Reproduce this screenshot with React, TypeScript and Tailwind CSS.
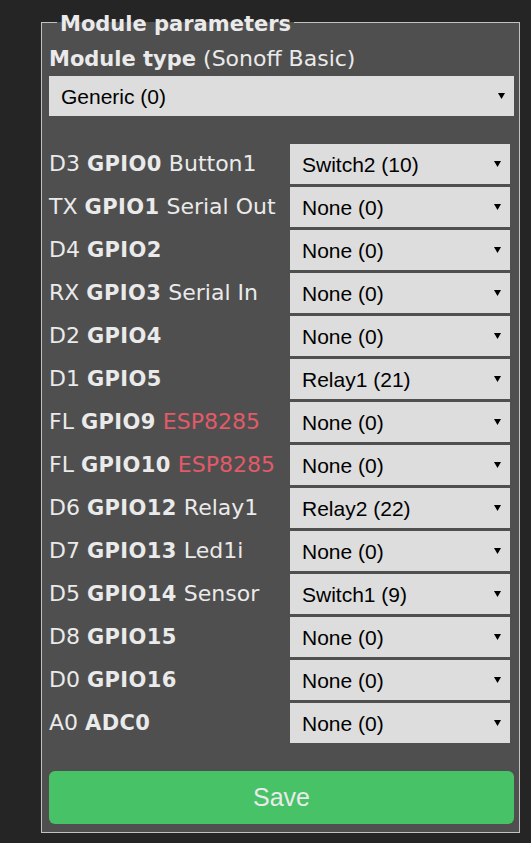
import React from 'react';

type Pin = {
  pad: string;
  gpio: string;
  note?: string;
  warn?: boolean;
  value: string;
};

const pins: Pin[] = [
  { pad: 'D3', gpio: 'GPIO0', note: 'Button1', value: 'Switch2 (10)' },
  { pad: 'TX', gpio: 'GPIO1', note: 'Serial Out', value: 'None (0)' },
  { pad: 'D4', gpio: 'GPIO2', value: 'None (0)' },
  { pad: 'RX', gpio: 'GPIO3', note: 'Serial In', value: 'None (0)' },
  { pad: 'D2', gpio: 'GPIO4', value: 'None (0)' },
  { pad: 'D1', gpio: 'GPIO5', value: 'Relay1 (21)' },
  { pad: 'FL', gpio: 'GPIO9', note: 'ESP8285', warn: true, value: 'None (0)' },
  { pad: 'FL', gpio: 'GPIO10', note: 'ESP8285', warn: true, value: 'None (0)' },
  { pad: 'D6', gpio: 'GPIO12', note: 'Relay1', value: 'Relay2 (22)' },
  { pad: 'D7', gpio: 'GPIO13', note: 'Led1i', value: 'None (0)' },
  { pad: 'D5', gpio: 'GPIO14', note: 'Sensor', value: 'Switch1 (9)' },
  { pad: 'D8', gpio: 'GPIO15', value: 'None (0)' },
  { pad: 'D0', gpio: 'GPIO16', value: 'None (0)' },
  { pad: 'A0', gpio: 'ADC0', value: 'None (0)' },
];

const options = ['None (0)', 'Switch1 (9)', 'Switch2 (10)', 'Relay1 (21)', 'Relay2 (22)'];

function Arrow() {
  return (
    <svg
      className="pointer-events-none absolute right-[9px] top-1/2 -translate-y-1/2"
      width="7"
      height="6"
      viewBox="0 0 7 6"
    >
      <path d="M0 0 H7 L3.5 6 Z" fill="#000" />
    </svg>
  );
}

function Dropdown({ value, items, className }: { value: string; items: string[]; className: string }) {
  return (
    <div className={'relative ' + className}>
      <select
        defaultValue={value}
        className="h-[40px] w-full appearance-none rounded-none bg-[#dddddd] pl-[12px] pr-[24px] font-['Liberation_Sans',Arial,sans-serif] text-[21px] leading-[25px] text-black outline-none"
      >
        {items.map((o) => (
          <option key={o}>{o}</option>
        ))}
      </select>
      <Arrow />
    </div>
  );
}

export default function App() {
  return (
    <div className="min-h-screen bg-[#252525] pt-[7px] font-['DejaVu_Sans',Verdana,sans-serif] text-[22px] leading-[25px] text-[#eaeaea]">
      <fieldset className="ml-[41px] w-[479px] border border-[#c2c2c2] bg-[#4f4f4f] pb-[8px] pl-[7px] pr-[5px] pt-[9px]">
        <legend className="ml-[8px] px-[3px] pt-[5px] text-[21px] font-bold">Module parameters</legend>

        <div>
          <b className="text-[21px]">Module type</b> (Sonoff Basic)
        </div>
        <Dropdown value="Generic (0)" items={['Generic (0)', 'Sonoff Basic (1)']} className="mt-[4px] w-full" />

        <div className="mt-[28px] flex w-[461px] flex-col gap-[3px]">
          {pins.map((p) => (
            <div key={p.gpio} className="flex items-center">
              <div className="w-[241px] whitespace-nowrap">
                {p.pad} <b className="text-[21px] tracking-[0.4px]">{p.gpio}</b>
                {p.note && (
                  <>
                    {' '}
                    <span className={p.warn ? 'text-[#e35a68]' : ''}>{p.note}</span>
                  </>
                )}
              </div>
              <Dropdown value={p.value} items={options} className="w-[220px]" />
            </div>
          ))}
        </div>

        <button className="mt-[28px] h-[53px] w-full rounded-[6px] bg-[#47c266] font-['Liberation_Sans',Arial,sans-serif] text-[25px] text-[#eaeaea]">
          Save
        </button>
      </fieldset>
    </div>
  );
}
